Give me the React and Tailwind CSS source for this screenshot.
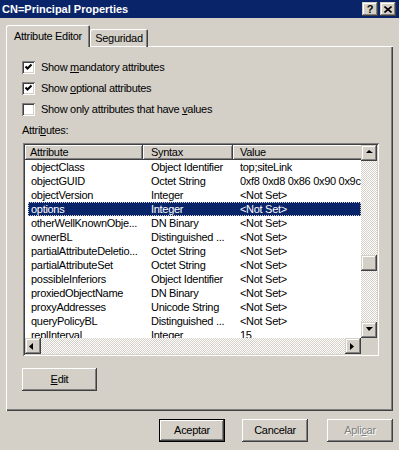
import React from "react";

const raised =
  "shadow-[inset_-1px_-1px_#404040,inset_1px_1px_#ffffff,inset_-2px_-2px_#808080]";
const scrollBtn =
  "shadow-[inset_-1px_-1px_#404040,inset_1px_1px_#d4d0c8,inset_-2px_-2px_#808080,inset_2px_2px_#ffffff]";
const sunken =
  "shadow-[inset_1px_1px_#808080,inset_-1px_-1px_#ffffff,inset_2px_2px_#404040,inset_-2px_-2px_#d4d0c8]";
const checker =
  "bg-[repeating-conic-gradient(#ffffff_0%_25%,#d4d0c8_0%_50%)] bg-[length:2px_2px]";

const rows = [
  ["objectClass", "Object Identifier", "top;siteLink"],
  ["objectGUID", "Octet String", "0xf8 0xd8 0x86 0x90 0x9c 0x4a"],
  ["objectVersion", "Integer", "<Not Set>"],
  ["options", "Integer", "<Not Set>"],
  ["otherWellKnownObje...", "DN Binary", "<Not Set>"],
  ["ownerBL", "Distinguished ...", "<Not Set>"],
  ["partialAttributeDeletio...", "Octet String", "<Not Set>"],
  ["partialAttributeSet", "Octet String", "<Not Set>"],
  ["possibleInferiors", "Object Identifier", "<Not Set>"],
  ["proxiedObjectName", "DN Binary", "<Not Set>"],
  ["proxyAddresses", "Unicode String", "<Not Set>"],
  ["queryPolicyBL", "Distinguished ...", "<Not Set>"],
  ["replInterval", "Integer", "15"],
];

function Arrow({ dir }) {
  const pts = {
    up: "4,1 1,4 8,4",
    down: "1,1 8,1 4,5",
    left: "4,1 4,8 0,4.5",
    right: "1,1 1,8 5,4.5",
  }[dir];
  return (
    <svg width="9" height="9" viewBox="0 0 9 9">
      <polygon points={pts} fill="#000" />
    </svg>
  );
}

function Check({ checked, children }) {
  return (
    <div className="flex items-center h-[13px]">
      <div className={`w-[13px] h-[13px] bg-white flex items-center justify-center ${sunken}`}>
        {checked && (
          <svg width="13" height="13" viewBox="0 0 13 13">
            <path d="M3.5 5.5 L5.5 7.5 L9.5 3.5" stroke="#000" strokeWidth="2" fill="none" />
          </svg>
        )}
      </div>
      <span className="ml-[6px] leading-[13px]">{children}</span>
    </div>
  );
}

function Button({ children, w = "w-[66px]", disabled, def, className = "" }) {
  return (
    <div
      className={`${w} h-[23px] flex items-center justify-center ${className} ${
        def
          ? "shadow-[inset_0_0_0_1px_#000000,inset_-2px_-2px_#404040,inset_2px_2px_#ffffff,inset_-3px_-3px_#808080]"
          : raised
      } ${disabled ? "text-[#808080] [text-shadow:1px_1px_#ffffff]" : ""}`}
    >
      {children}
    </div>
  );
}

export default function App() {
  return (
    <div className="w-[399px] h-[450px] bg-[#d4d0c8] text-[11px] text-black tracking-[-0.3px] font-['Liberation_Sans',Arial,sans-serif] overflow-hidden">
      {/* title bar */}
      <div className="h-[18px] bg-[#0a246a] flex items-center justify-between pl-[2px] pr-[3px]">
        <span className="text-white font-bold tracking-normal">CN=Principal Properties</span>
        <div className="flex gap-[2px]">
          <div className={`w-[16px] h-[14px] bg-[#d4d0c8] flex items-center justify-center font-bold text-[11px] leading-none ${scrollBtn}`}>
            ?
          </div>
          <div className={`w-[16px] h-[14px] bg-[#d4d0c8] flex items-center justify-center ${scrollBtn}`}>
            <svg width="8" height="7" viewBox="0 0 8 7">
              <path d="M0.5 0.5 L7.5 6.5 M7.5 0.5 L0.5 6.5" stroke="#000" strokeWidth="1.6" />
            </svg>
          </div>
        </div>
      </div>

      {/* tabs */}
      <div className="mt-[7px] flex items-end h-[22px] pl-[6px]">
        <div className="relative z-10 w-[84px] h-[22px] bg-[#d4d0c8] flex items-center justify-center rounded-t-[2px] shadow-[inset_1px_1px_#ffffff,inset_-1px_0_#404040,inset_-2px_0_#808080]">
          Attribute Editor
        </div>
        <div className="w-[58px] h-[18px] flex items-center justify-center rounded-t-[2px] shadow-[inset_1px_1px_#ffffff,inset_-1px_0_#404040,inset_-2px_0_#808080]">
          Seguridad
        </div>
      </div>

      {/* panel */}
      <div className="-mt-px mx-[6px] h-[365px] pt-[15px] pl-[16px] shadow-[inset_1px_1px_#ffffff,inset_-1px_-1px_#404040,inset_-2px_-2px_#808080]">
        <div className="flex flex-col gap-[8px]">
          <Check checked>
            Show <u>m</u>andatory attributes
          </Check>
          <Check checked>
            Show <u>o</u>ptional attributes
          </Check>
          <Check>
            Show only attributes that have <u>v</u>alues
          </Check>
        </div>
        <div className="mt-[8px] leading-[13px]">
          Attri<u>b</u>utes:
        </div>

        {/* list view */}
        <div className={`mt-[6px] ml-[1px] w-[356px] h-[213px] bg-white p-[2px] ${sunken}`}>
          <div className="flex flex-col h-full">
            <div className="flex flex-1 min-h-0">
              <div className="flex-1 min-w-0 overflow-hidden flex flex-col">
                <div className="h-[15px] flex shrink-0 bg-[#d4d0c8] leading-[15px]">
                  <div className={`w-[118px] shrink-0 pl-[5px] ${raised}`}>Attribute</div>
                  <div className={`w-[90px] shrink-0 pl-[8px] ${raised}`}>Syntax</div>
                  <div className={`w-[180px] shrink-0 pl-[7px] ${raised}`}>Value</div>
                </div>
                {rows.map((r, i) => (
                  <div
                    key={r[0]}
                    className={`ml-[3px] h-[14px] shrink-0 flex leading-[14px] whitespace-nowrap ${
                      i === 3
                        ? "bg-[#0a246a] text-white outline-1 outline-dotted outline-[#d4d0c8] -outline-offset-1"
                        : ""
                    }`}
                  >
                    <div className="w-[115px] shrink-0 pl-[3px]">{r[0]}</div>
                    <div className="w-[90px] shrink-0 pl-[8px]">{r[1]}</div>
                    <div className="w-[200px] shrink-0 pl-[7px]">{r[2]}</div>
                  </div>
                ))}
              </div>
              <div className="w-[16px] flex flex-col shrink-0">
                <div className={`h-[16px] bg-[#d4d0c8] flex items-center justify-center ${scrollBtn}`}>
                  <Arrow dir="up" />
                </div>
                <div className={`h-[94px] ${checker}`} />
                <div className={`h-[16px] bg-[#d4d0c8] ${scrollBtn}`} />
                <div className={`flex-1 ${checker}`} />
                <div className={`h-[16px] bg-[#d4d0c8] flex items-center justify-center ${scrollBtn}`}>
                  <Arrow dir="down" />
                </div>
              </div>
            </div>
            <div className="h-[16px] flex shrink-0">
              <div className={`w-[16px] bg-[#d4d0c8] flex items-center justify-center ${scrollBtn}`}>
                <Arrow dir="left" />
              </div>
              <div className={`flex-1 ${checker}`} />
              <div className={`w-[16px] bg-[#d4d0c8] flex items-center justify-center ${scrollBtn}`}>
                <Arrow dir="right" />
              </div>
              <div className="w-[16px] bg-[#d4d0c8]" />
            </div>
          </div>
        </div>

        <Button w="w-[75px]" className="mt-[12px]">
          <span>
            <u>E</u>dit
          </span>
        </Button>
      </div>

      {/* bottom buttons */}
      <div className="mt-[8px] flex justify-end pr-[6px]">
        <Button def>Aceptar</Button>
        <Button className="ml-[17px]">Cancelar</Button>
        <Button disabled className="ml-[19px]">
          <span>
            Apli<u>c</u>ar
          </span>
        </Button>
      </div>
    </div>
  );
}
